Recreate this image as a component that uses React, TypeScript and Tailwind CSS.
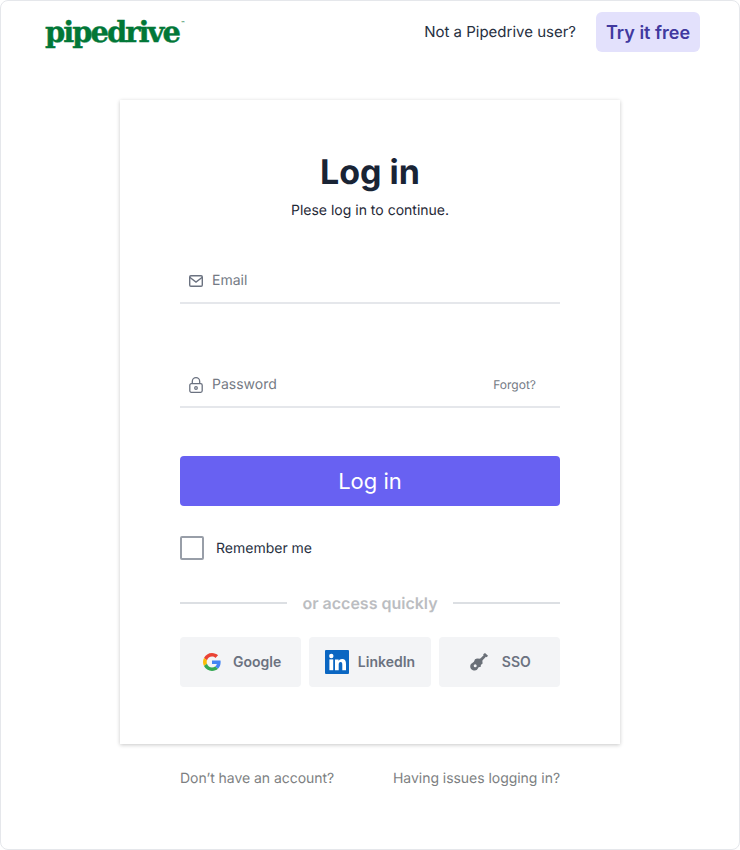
const GoogleIcon = () => (
  <svg viewBox="0 0 48 48" className="w-[18px] h-[18px]">
    <path fill="#EA4335" d="M24 9.500c3.500 0 6.700 1.200 9.200 3.600l6.900-6.900C35.900 2.400 30.500 0 24 0 14.600 0 6.500 5.400 2.600 13.200l8 6.200C12.500 13.700 17.800 9.500 24 9.500z" />
    <path fill="#4285F4" d="M47 24.500c0-1.600-.1-3.100-.4-4.500H24v9h12.900c-.6 3-2.200 5.500-4.700 7.200l7.700 6C44.400 38 47 31.800 47 24.500z" />
    <path fill="#FBBC05" d="M10.600 28.600c-.5-1.400-.8-3-.8-4.600s.3-3.200.8-4.600l-8-6.200C.9 16.500 0 20.100 0 24s.9 7.500 2.600 10.800l8-6.200z" />
    <path fill="#34A853" d="M24 48c6.500 0 11.900-2.100 15.900-5.800l-7.700-6c-2.200 1.500-5 2.300-8.200 2.300-6.200 0-11.500-4.200-13.400-9.900l-8 6.200C6.500 42.600 14.600 48 24 48z" />
  </svg>
);

const LinkedInIcon = () => (
  <svg viewBox="0 0 24 24" className="w-6 h-6">
    <rect width="24" height="24" rx="1" fill="#0a66c2" />
    <circle cx="6.300" cy="6" r="2.200" fill="#fff" />
    <rect x="4.400" y="9.400" width="3.800" height="10.800" fill="#fff" />
    <path fill="#fff" d="M10 9.400h3.600v1.500c.5-.9 1.700-1.800 3.400-1.800 3.400 0 4 2.200 4 5.100v6h-3.700v-5.200c0-1.300 0-2.900-1.700-2.900s-1.900 1.400-1.900 2.800v5.300H10z" />
  </svg>
);

const KeyIcon = () => (
  <svg viewBox="0 0 18 18" className="w-[18px] h-[18px]" fill="#6a7078">
    <path
      fillRule="evenodd"
      d="M5 6.200 7 5.400l3.800.3 1.500 1.500.3 3.300-1.800 1.400v1.900l-2.200.5-1.600 2.500C5.500 18 2.800 17.600 1.300 16.200-.2 14.700 0 12.300 1 11l2.900-2.200zM5.200 11.200a1.500 1.500 0 1 0 0 3 1.500 1.500 0 0 0 0-3z"
    />
    <path d="m9.600 6.200 4-4-.4-.9L15 0l3 2.700-1.300 1.500-.8-.5-4 4.200z" />
  </svg>
);

const MailIcon = () => (
  <svg viewBox="0 0 16 16" className="w-4 h-4" fill="none" stroke="#6b7280" strokeWidth="1.400">
    <rect x="1.700" y="2.700" width="12.600" height="10.600" rx="1.200" />
    <path d="m1.700 4.200 6.300 4.800 6.300-4.800" />
  </svg>
);

const LockIcon = () => (
  <svg viewBox="0 0 16 16" className="w-4 h-4" fill="none" stroke="#6b7280" strokeWidth="1.300">
    <rect x="1.800" y="6.700" width="12.400" height="8.600" rx="1.500" />
    <path d="M4.300 6.700V4.400a3.700 3.700 0 0 1 7.400 0v2.300" />
    <circle cx="8" cy="11" r="1.300" />
  </svg>
);

const socials = [
  { label: "Google", icon: <GoogleIcon />, cls: "gap-3 pl-[3px]" },
  { label: "LinkedIn", icon: <LinkedInIcon />, cls: "gap-[9px]" },
  { label: "SSO", icon: <KeyIcon />, cls: "gap-3.5 pl-[2px]" },
];

export default function App() {
  return (
    <div className="w-[740px] h-[850px] bg-white border border-[#e5e7eb] rounded-lg font-['Inter',sans-serif] text-[#1f2937] overflow-hidden antialiased [text-rendering:geometricPrecision]">
      {/* Header */}
      <header className="flex items-center justify-between pl-11 pr-[39px] pt-[11px]">
        <a className="flex items-start font-['DejaVu_Serif',serif] font-bold text-[29px] leading-10 tracking-[-2px] text-[#017737] [-webkit-text-stroke:0.4px_#017737]">
          pipedrive
          <span className="mt-[8px] ml-[2px] text-[4px] leading-[6px] tracking-normal [-webkit-text-stroke:0]">™</span>
        </a>
        <div className="flex items-center gap-5">
          <span className="text-[15px] text-[#27303f]">Not a Pipedrive user?</span>
          <button className="h-10 w-[104px] rounded-md bg-[#e3e1fc] text-[18px] font-semibold text-[#41399f]">
            Try it free
          </button>
        </div>
      </header>

      {/* Card */}
      <main className="w-[500px] mx-auto mt-12 bg-white shadow-[0_1px_4px_rgba(0,0,0,0.22)] px-[60px] pt-[51px] h-[644px]">
        <h1 className="text-[34px] leading-[44px] font-bold text-center text-[#192435]">Log in</h1>
        <p className="mt-[6px] text-sm leading-5 text-center text-[#1f2937]">Plese log in to continue.</p>

        <div className="mt-[39px] h-[44px] flex items-center border-b-2 border-[#e5e7eb] pl-2 pb-[1px]">
          <MailIcon />
          <span className="ml-2 text-sm text-[#747a84]">Email</span>
        </div>

        <div className="mt-[60px] h-[44px] flex items-center border-b-2 border-[#e5e7eb] pl-2 pr-6 pb-[1px]">
          <LockIcon />
          <span className="ml-2 text-sm text-[#747a84]">Password</span>
          <span className="ml-auto text-xs text-[#747a84]">Forgot?</span>
        </div>

        <button className="mt-12 w-full h-[50px] rounded bg-[#6861f2] text-white text-[22px]">Log in</button>

        <label className="mt-[30px] flex items-center gap-3">
          <span className="w-6 h-6 rounded-[2px] border-2 border-[#989ea8] bg-white" />
          <span className="mt-[2px] text-sm text-[#27303f]">Remember me</span>
        </label>

        <div className="mt-[31px] flex items-center">
          <div className="w-[107px] h-0.5 bg-[#dcdfe3]" />
          <span className="flex-1 text-center text-base leading-6 font-semibold text-[#bbbdc1]">or access quickly</span>
          <div className="w-[107px] h-0.5 bg-[#dcdfe3]" />
        </div>

        <div className="mt-[22px] grid grid-cols-3 gap-2">
          {socials.map((s) => (
            <button
              key={s.label}
              className={`h-[50px] rounded bg-[#f3f4f6] flex items-center justify-center text-sm font-semibold text-[#6b7280] ${s.cls}`}
            >
              {s.icon}
              {s.label}
            </button>
          ))}
        </div>
      </main>

      {/* Footer links */}
      <footer className="w-[380px] mx-auto mt-[25px] flex justify-between text-sm leading-5 tracking-[-0.04px] text-[#7d7f82]">
        <a>Don’t have an account?</a>
        <a>Having issues logging in?</a>
      </footer>
    </div>
  );
}
